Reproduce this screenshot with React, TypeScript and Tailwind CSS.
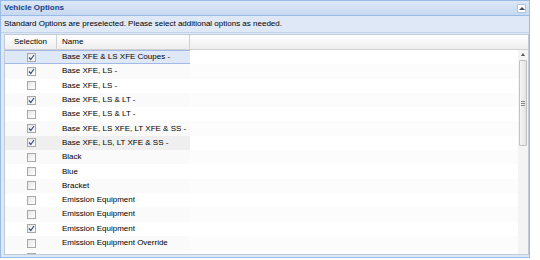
import React from 'react';

type Row = { name: string; checked: boolean; state?: 'selected' | 'hover' };

const rows: Row[] = [
  { name: 'Base XFE & LS XFE Coupes -', checked: true, state: 'selected' },
  { name: 'Base XFE, LS -', checked: true },
  { name: 'Base XFE, LS -', checked: false },
  { name: 'Base XFE, LS & LT -', checked: true },
  { name: 'Base XFE, LS & LT -', checked: false },
  { name: 'Base XFE, LS XFE, LT XFE & SS -', checked: true },
  { name: 'Base XFE, LS, LT XFE & SS -', checked: true, state: 'hover' },
  { name: 'Black', checked: false },
  { name: 'Blue', checked: false },
  { name: 'Bracket', checked: false },
  { name: 'Emission Equipment', checked: false },
  { name: 'Emission Equipment', checked: false },
  { name: 'Emission Equipment', checked: true },
  { name: 'Emission Equipment Override', checked: false },
  { name: '', checked: false },
];

function Check({ checked }: { checked: boolean }) {
  return (
    <div className="w-[9px] h-[9px] border border-[#a8a8a8] bg-gradient-to-br from-[#e6e6e6] to-white flex items-center justify-center">
      {checked && (
        <svg width="7" height="7" viewBox="0 0 7 7">
          <path d="M1 3.5 L2.8 5.5 L6 1" fill="none" stroke="#3a4d80" strokeWidth="1.2" />
        </svg>
      )}
    </div>
  );
}

export default function App() {
  return (
    <div className="w-[540px] h-[260px] bg-white" style={{ fontFamily: '"Liberation Sans", Arial, sans-serif' }}>
      <div className="w-[530px] h-[258px] border border-[#99bbe8] flex flex-col bg-[#dfe8f6]">
        {/* panel header */}
        <div className="h-[15px] shrink-0 flex items-center justify-between px-[3px] bg-gradient-to-b from-[#dde8f6] to-[#c7d8ef] border-b border-[#99bbe8]">
          <span className="text-[8px] font-bold text-[#15428b]">Vehicle Options</span>
          <div className="w-[9px] h-[9px] rounded-[1px] bg-white border border-[#a9c1e3] flex items-center justify-center">
            <div className="w-0 h-0 border-l-[3px] border-r-[3px] border-b-[3px] border-l-transparent border-r-transparent border-b-[#3a4a6a]" />
          </div>
        </div>
        {/* toolbar text */}
        <div className="h-[17px] shrink-0 flex items-center px-[3px] text-[8px] text-black border-b border-[#c3d2e6]">
          Standard Options are preselected. Please select additional options as needed.
        </div>
        {/* grid */}
        <div className="flex-1 flex flex-col ml-[3px] mt-[1px] mb-[2px] bg-white border border-[#c0c9d6] overflow-hidden">
          <div className="h-[15px] shrink-0 flex text-[8px] bg-gradient-to-b from-white to-[#eeeeee] border-b border-[#d0d0d0]">
            <div className="w-[52px] flex items-center justify-center border-r border-[#d0d0d0]">Selection</div>
            <div className="w-[133px] flex items-center pl-[5px] border-r border-[#d0d0d0]">Name</div>
            <div className="flex-1" />
          </div>
          <div className="flex-1 flex overflow-hidden">
            <div className="flex-1 flex flex-col">
              {rows.map((r, i) => (
                <div key={i} className="h-[14.3px] shrink-0 flex text-[8px] text-black">
                  <div
                    className={`flex ${
                      r.state === 'selected'
                        ? 'bg-[#dfe8f6] border-y border-[#a3bae9]'
                        : r.state === 'hover'
                        ? 'bg-[#efefef]'
                        : i % 2 === 1
                        ? 'bg-[#fafafa]'
                        : ''
                    }`}
                  >
                    <div className="w-[52px] flex items-center justify-center">
                      <Check checked={r.checked} />
                    </div>
                    <div className="w-[133px] flex items-center pl-[5px]">{r.name}</div>
                  </div>
                  <div className={`flex-1 ${i % 2 === 1 ? 'bg-[#fcfcfc]' : ''}`} />
                </div>
              ))}
            </div>
            {/* vertical scrollbar */}
            <div className="w-[10px] shrink-0 flex flex-col items-center bg-[#f4f4f4]">
              <div className="h-[9px] flex items-center justify-center">
                <div className="w-0 h-0 border-l-[2.5px] border-r-[2.5px] border-b-[3px] border-l-transparent border-r-transparent border-b-[#555]" />
              </div>
              <div className="mt-[1px] w-[8px] h-[86px] border border-[#c2c2c2] rounded-[1px] bg-gradient-to-r from-[#f6f6f6] to-[#e2e2e2] flex flex-col items-center justify-center gap-[1px]">
                <div className="w-[4px] h-[1px] bg-[#8a8a8a]" />
                <div className="w-[4px] h-[1px] bg-[#8a8a8a]" />
                <div className="w-[4px] h-[1px] bg-[#8a8a8a]" />
              </div>
            </div>
          </div>
        </div>
      </div>
    </div>
  );
}
